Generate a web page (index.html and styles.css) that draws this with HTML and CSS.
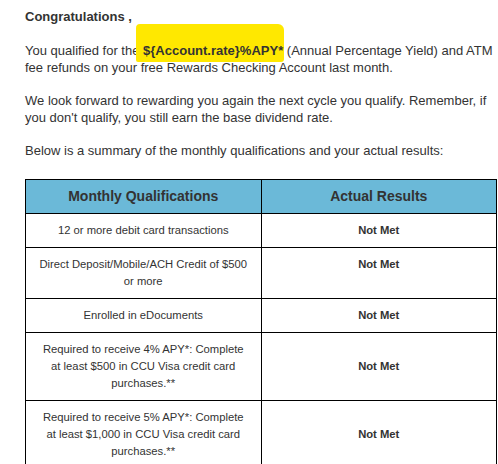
FILE: index.html
```html
<!DOCTYPE html>
<html>
<head>
<meta charset="utf-8">
<link rel="stylesheet" href="styles.css">
</head>
<body>
<div class="mail">
  <p class="greet">Congratulations ,</p>
  <p>You qualified for the <span class="hl"><b>${Account.rate}%APY*</b></span> (Annual Percentage Yield) and ATM fee refunds on your free Rewards Checking Account last month.</p>
  <p>We look forward to rewarding you again the next cycle you qualify. Remember, if you don't qualify, you still earn the base dividend rate.</p>
  <p class="lead">Below is a summary of the monthly qualifications and your actual results:</p>
  <table class="quals">
    <thead>
      <tr><th>Monthly Qualifications</th><th>Actual Results</th></tr>
    </thead>
    <tbody>
      <tr><td>12 or more debit card transactions</td><td class="res">Not Met</td></tr>
      <tr><td>Direct Deposit/Mobile/ACH Credit of $500 or more</td><td class="res top">Not Met</td></tr>
      <tr><td>Enrolled in eDocuments</td><td class="res">Not Met</td></tr>
      <tr><td>Required to receive 4% APY*: Complete at least $500 in CCU Visa credit card purchases.**</td><td class="res">Not Met</td></tr>
      <tr><td>Required to receive 5% APY*: Complete at least $1,000 in CCU Visa credit card purchases.**</td><td class="res">Not Met</td></tr>
    </tbody>
  </table>
</div>
</body>
</html>
```
FILE: styles.css
```css
html, body {
  margin: 0;
  padding: 0;
  background: #ffffff;
}
body {
  font-family: "Liberation Sans", Arial, sans-serif;
  color: #333333;
  font-size: 13px;
  line-height: 17px;
}
.mail {
  padding: 8px 1px 0 25px;
}
p {
  margin: 0 0 16px 0;
}
.greet {
  font-weight: bold;
  margin-bottom: 17px;
}
.lead {
  margin-bottom: 20px;
}
.hl {
  position: relative;
  z-index: 0;
}
.hl::before {
  content: "";
  position: absolute;
  left: -7px;
  right: -1px;
  top: -19px;
  bottom: -4px;
  background: #ffe800;
  border-radius: 4px 6px 3px 2px;
  z-index: -1;
}
.hl b {
  font-weight: bold;
}
.quals {
  width: 472px;
  border-collapse: collapse;
  table-layout: fixed;
}
.quals th, .quals td {
  border: 1px solid #000000;
  width: 50%;
  text-align: center;
}
.quals th {
  background: #6bb9d8;
  font-size: 14px;
  font-weight: bold;
  color: #333333;
  padding: 8px 10px;
  line-height: 17px;
}
.quals td {
  font-size: 11.25px;
  line-height: 17px;
  padding: 8px 13px;
  vertical-align: middle;
  color: #333333;
}
.quals td.res {
  font-weight: bold;
}
.quals td.top {
  vertical-align: top;
}
```
